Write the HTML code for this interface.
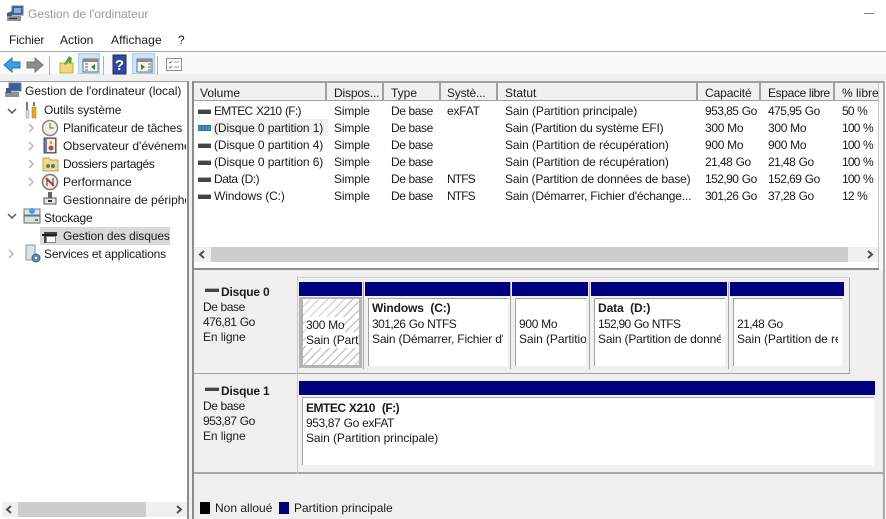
<!DOCTYPE html>
<html lang="fr"><head><meta charset="utf-8"><title>Gestion de l'ordinateur</title>
<style>
html,body{margin:0;padding:0}
body{width:886px;height:519px;position:relative;overflow:hidden;background:#f0f0f0;font:12px/16px "Liberation Sans",sans-serif;color:#1a1a1a}
div,span,svg{position:absolute}
.t{white-space:nowrap;line-height:16px}
.b{font-weight:bold}
.navy{background:#000080}
.cell{overflow:hidden;white-space:nowrap}
.part{background:#fff;border-left:1px solid #a0a0a0;border-top:1px solid #a0a0a0}
.hd{top:83px;height:17px;background:#f0f0f0;border-right:2px solid #a0a0a0;border-bottom:1px solid #a0a0a0}
.go{letter-spacing:-.55px;word-spacing:.6px}
.mo{letter-spacing:-.3px}
.pc{letter-spacing:-.8px;word-spacing:.8px}
.si{letter-spacing:-.15px}
.db{letter-spacing:-.4px}
.nt{letter-spacing:-.9px}
.st{letter-spacing:-.07px}
.sd{letter-spacing:-.17px}
</style></head><body>

<!-- title + menu -->
<div style="left:0;top:0;width:886px;height:51px;background:#fff"></div>
<svg style="left:6px;top:5px" width="18" height="17" viewBox="0 0 18 17"><rect x="6" y="1" width="11" height="9" fill="#3a5c9c" stroke="#6b7a99"/><rect x="8" y="3" width="7" height="5" fill="#7fb0e8"/><path d="M1 8l5-2v5H1z" fill="#41598a"/><rect x="1" y="11" width="14" height="5" fill="#8a8f98"/><rect x="3" y="13" width="8" height="1" fill="#333"/></svg>
<div class="t" style="left:28px;top:6px;color:#999">Gestion de l'ordinateur</div>
<div style="left:864px;top:13px;width:10px;height:1px;background:#888"></div>
<div class="t" style="left:9px;top:32px;letter-spacing:-.1px">Fichier</div>
<div class="t" style="left:60px;top:32px">Action</div>
<div class="t" style="left:111px;top:32px;letter-spacing:.1px">Affichage</div>
<div class="t" style="left:178px;top:32px">?</div>
<div style="left:0;top:51px;width:886px;height:1px;background:#a9a9a9"></div>

<!-- toolbar -->
<div style="left:0;top:52px;width:886px;height:22px;background:#fbfbfb"></div>
<svg style="left:0;top:52px" width="190" height="24" viewBox="0 0 190 24">
<path d="M4 13l8-7v4h8v6h-8v4z" fill="#3ea0e4" stroke="#2a77b8"/>
<path d="M43 13l-8-7v4h-8v6h8v4z" fill="#8c8c8c" stroke="#777"/>
<rect x="49" y="4" width="1" height="19" fill="#b0b0b0"/>
<path d="M60 11h13v10H60z" fill="#f2d67c" stroke="#c9a94e"/><path d="M64 12l5-8 3 2-1 6-3-2-2 3z" fill="#58a83c"/>
<rect x="78.500" y="1.500" width="21" height="20" fill="#cce4f7" stroke="#a6cfee"/>
<rect x="83" y="7" width="15" height="13" fill="#f2f2f2" stroke="#707070" stroke-width="1"/><rect x="83" y="7" width="15" height="3" fill="#8a8a8a"/><path d="M95 12v6l-4-3z" fill="#2e8b3e"/><path d="M85 12h3M85 15h3M85 18h3" stroke="#666"/>
<rect x="103" y="4" width="1" height="19" fill="#b0b0b0"/>
<rect x="113" y="3" width="13" height="19" fill="#30479c" stroke="#1c2e70"/>
<text x="119.500" y="18" font-family="Liberation Sans" font-size="15" font-weight="bold" fill="#fff" text-anchor="middle">?</text>
<rect x="132.500" y="1.500" width="22" height="20" fill="#cce4f7" stroke="#a6cfee"/>
<rect x="137" y="7" width="15" height="13" fill="#f2f2f2" stroke="#707070"/><rect x="137" y="7" width="15" height="3" fill="#8a8a8a"/><path d="M141 12v6l4-3z" fill="#2e8b3e"/><path d="M148 12h3M148 15h3M148 18h3" stroke="#666"/>
<rect x="157" y="4" width="1" height="19" fill="#b0b0b0"/>
<rect x="166.500" y="6.500" width="15" height="12" fill="#fff" stroke="#8c8c8c"/><path d="M169 10l1 1 2-2M169 15l1 1 2-2" stroke="#4a8fd0" fill="none"/><path d="M174 10h5M174 15h5" stroke="#999"/>
</svg>

<!-- left tree panel -->
<div style="left:0;top:81px;width:187px;height:438px;background:#fff;border-top:1px solid #a0a0a0;box-sizing:border-box"></div>
<div style="left:187px;top:81px;width:2px;height:438px;background:#8c8c8c"></div>
<div style="left:40px;top:227px;width:130px;height:18px;background:#d9d9d9"></div>
<div style="left:0;top:82px;width:186px;height:410px;overflow:hidden">
<div class="t" style="left:25px;top:1px">Gestion de l'ordinateur (local)</div>
<div class="t" style="left:44px;top:20px;letter-spacing:-.1px">Outils système</div>
<div class="t" style="left:63px;top:38px;letter-spacing:-.1px">Planificateur de tâches</div>
<div class="t" style="left:63px;top:56px">Observateur d'événements</div>
<div class="t" style="left:63px;top:74px;letter-spacing:-.3px">Dossiers partagés</div>
<div class="t" style="left:63px;top:92px">Performance</div>
<div class="t" style="left:63px;top:110px">Gestionnaire de périphériques</div>
<div class="t" style="left:44px;top:128px;letter-spacing:-.2px">Stockage</div>
<div class="t" style="left:63px;top:146px;letter-spacing:-.1px">Gestion des disques</div>
<div class="t" style="left:44px;top:164px;letter-spacing:-.17px">Services et applications</div>
</div>
<svg style="left:0;top:82px" width="62" height="182" viewBox="0 0 62 182">
<rect x="9" y="1" width="12" height="8" fill="#3a5c9c" stroke="#6b7a99"/><rect x="5" y="10" width="14" height="5" fill="#8a8f98"/><rect x="6" y="6" width="5" height="5" fill="#41598a"/>
<path d="M8 27l4 4 4-4" fill="none" stroke="#555" stroke-width="1.500"/>
<path d="M27 20v10M34 20v4" stroke="#777" stroke-width="2"/><rect x="26" y="28" width="3" height="8" fill="#ddd" stroke="#888" stroke-width=".5"/><rect x="32" y="25" width="4" height="11" fill="#e9a820" stroke="#9a7010" stroke-width=".5"/>
<path d="M29 42l4 4-4 4M29 60l4 4-4 4M29 78l4 4-4 4M29 96l4 4-4 4" fill="none" stroke="#b4b4b4" stroke-width="1.500"/>
<path d="M8 132l4 4 4-4" fill="none" stroke="#555" stroke-width="1.500"/>
<path d="M9 168l4 4-4 4" fill="none" stroke="#b4b4b4" stroke-width="1.500"/>
<circle cx="50" cy="46" r="7.500" fill="#f2efe3" stroke="#8a8a8a" stroke-width="1.500"/><path d="M50 41v5h4" fill="none" stroke="#666"/>
<rect x="44" y="56" width="12" height="15" fill="#6f7fb0" stroke="#445"/><rect x="47" y="57" width="8" height="13" fill="#f5f0dc"/><circle cx="51" cy="66" r="2.500" fill="#c8444c"/><rect x="50" y="59" width="2" height="3" fill="#d9a020"/>
<path d="M43 76h6l2 2h7v11H43z" fill="#eed98c" stroke="#bda14c"/><circle cx="48" cy="84" r="2" fill="#4c8c4c"/><circle cx="53" cy="84" r="2" fill="#4a70b0"/>
<circle cx="50" cy="100" r="7.500" fill="#f4efe6" stroke="#777" stroke-width="1.500"/><path d="M46 96l8 8" stroke="#c63a2c" stroke-width="2"/><path d="M47 104v-6M53 96v6" stroke="#333"/>
<rect x="48" y="110" width="4" height="6" fill="#666"/><rect x="44" y="116" width="12" height="6" fill="#e8e8e8" stroke="#555"/><rect x="48" y="118" width="4" height="2" fill="#333"/>
<rect x="24" y="127" width="16" height="6" fill="#dfe7ee" stroke="#6a7a88"/><circle cx="32" cy="129" r="3" fill="#4a9de0"/><rect x="24" y="134" width="16" height="7" fill="#d8e2d8" stroke="#667"/><rect x="35" y="137" width="3" height="2" fill="#3fa040"/>
<rect x="44" y="150" width="13" height="4" fill="#444"/><rect x="42" y="152" width="15" height="2" fill="#222"/><path d="M46.500 154.500h9v6h-9z" fill="#fff" stroke="#888"/><rect x="44" y="154" width="2" height="7" fill="#444"/>
<rect x="26" y="163" width="9" height="15" fill="#dfe3e8" stroke="#8a94a0"/><circle cx="36" cy="176" r="4" fill="#5a90c0" stroke="#366690"/><circle cx="36" cy="176" r="1.200" fill="#fff"/>
</svg>
<!-- left scrollbar -->
<div style="left:2px;top:502px;width:185px;height:15px;background:#f0f0f0"></div>
<div style="left:18px;top:502px;width:128px;height:15px;background:#cdcdcd"></div>
<svg style="left:0;top:502px" width="187" height="15"><path d="M11 4L7 7.500l4 3.500M177 4l4 3.500-4 3.500" fill="none" stroke="#505050" stroke-width="2"/></svg>

<!-- list panel -->
<div style="left:192px;top:81px;width:694px;height:189px;background:#fff;border-top:2px solid #a0a0a0;box-sizing:border-box"></div>
<div style="left:878px;top:83px;width:1px;height:187px;background:#c8c8c8"></div>
<div style="left:879px;top:83px;width:4px;height:187px;background:#f8f8f8"></div>
<div style="left:194px;top:268px;width:685px;height:2px;background:#8c8c8c"></div>
<div class="hd" style="left:194px;width:131px"></div>
<div class="hd" style="left:327px;width:55px"></div>
<div class="hd" style="left:384px;width:55px"></div>
<div class="hd" style="left:441px;width:55px"></div>
<div class="hd" style="left:498px;width:198px"></div>
<div class="hd" style="left:698px;width:61px"></div>
<div class="hd" style="left:761px;width:72px"></div>
<div class="hd" style="left:835px;width:43px;border-right:0"></div>
<div class="t" style="left:200px;top:85px">Volume</div>
<div class="t si" style="left:334px;top:85px">Dispos...</div>
<div class="t" style="left:391px;top:85px">Type</div>
<div class="t" style="left:447px;top:85px;letter-spacing:-.2px">Systè...</div>
<div class="t" style="left:505px;top:85px">Statut</div>
<div class="t" style="left:705px;top:85px;letter-spacing:-.1px">Capacité</div>
<div class="t" style="left:768px;top:85px;letter-spacing:-.35px">Espace libre</div>
<div class="t" style="left:842px;top:85px">% libre</div>

<div style="left:212px;top:119px;width:116px;height:17px;background:#f0f0f0"></div>
<svg style="left:197px;top:105px" width="16" height="100">
<g fill="#444"><rect x="1" y="4" width="13" height="5"/><rect x="1" y="38" width="13" height="5"/><rect x="1" y="55" width="13" height="5"/><rect x="1" y="72" width="13" height="5"/><rect x="1" y="89" width="13" height="5"/></g>
<g fill="#a8b8a8"><rect x="1" y="4" width="13" height="1"/><rect x="1" y="38" width="13" height="1"/><rect x="1" y="55" width="13" height="1"/><rect x="1" y="72" width="13" height="1"/><rect x="1" y="89" width="13" height="1"/></g>
<rect x="1" y="20" width="13" height="6" fill="#1f66b0"/><path d="M1 22h13M1 24h13M3 20v6M6 20v6M9 20v6M12 20v6" stroke="#9fd0f0" stroke-width=".4"/>
</svg>

<div class="t" style="left:214px;top:103px;letter-spacing:-.7px;word-spacing:1px">EMTEC X210 (F:)</div><div class="t si" style="left:334px;top:103px">Simple</div><div class="t db" style="left:391px;top:103px">De base</div><div class="t" style="left:447px;top:103px;letter-spacing:-.2px">exFAT</div><div class="t st" style="left:505px;top:103px">Sain (Partition principale)</div><div class="t go" style="left:705px;top:103px">953,85 Go</div><div class="t go" style="left:768px;top:103px">475,95 Go</div><div class="t pc" style="left:842px;top:103px">50 %</div>
<div class="t" style="left:214px;top:120px;letter-spacing:-.1px">(Disque 0 partition 1)</div><div class="t si" style="left:334px;top:120px">Simple</div><div class="t db" style="left:391px;top:120px">De base</div><div class="t" style="left:505px;top:120px;letter-spacing:-.25px">Sain (Partition du système EFI)</div><div class="t mo" style="left:705px;top:120px">300 Mo</div><div class="t mo" style="left:768px;top:120px">300 Mo</div><div class="t pc" style="left:842px;top:120px">100 %</div>
<div class="t" style="left:214px;top:137px;letter-spacing:-.1px">(Disque 0 partition 4)</div><div class="t si" style="left:334px;top:137px">Simple</div><div class="t db" style="left:391px;top:137px">De base</div><div class="t st" style="left:505px;top:137px">Sain (Partition de récupération)</div><div class="t mo" style="left:705px;top:137px">900 Mo</div><div class="t mo" style="left:768px;top:137px">900 Mo</div><div class="t pc" style="left:842px;top:137px">100 %</div>
<div class="t" style="left:214px;top:154px;letter-spacing:-.1px">(Disque 0 partition 6)</div><div class="t si" style="left:334px;top:154px">Simple</div><div class="t db" style="left:391px;top:154px">De base</div><div class="t st" style="left:505px;top:154px">Sain (Partition de récupération)</div><div class="t go" style="left:705px;top:154px">21,48 Go</div><div class="t go" style="left:768px;top:154px">21,48 Go</div><div class="t pc" style="left:842px;top:154px">100 %</div>
<div class="t" style="left:214px;top:171px;letter-spacing:-.45px;word-spacing:.6px">Data (D:)</div><div class="t si" style="left:334px;top:171px">Simple</div><div class="t db" style="left:391px;top:171px">De base</div><div class="t nt" style="left:447px;top:171px">NTFS</div><div class="t sd" style="left:505px;top:171px">Sain (Partition de données de base)</div><div class="t go" style="left:705px;top:171px">152,90 Go</div><div class="t go" style="left:768px;top:171px">152,69 Go</div><div class="t pc" style="left:842px;top:171px">100 %</div>
<div class="t" style="left:214px;top:188px;letter-spacing:-.1px">Windows (C:)</div><div class="t si" style="left:334px;top:188px">Simple</div><div class="t db" style="left:391px;top:188px">De base</div><div class="t nt" style="left:447px;top:188px">NTFS</div><div class="t sd" style="left:505px;top:188px">Sain (Démarrer, Fichier d'échange...</div><div class="t go" style="left:705px;top:188px">301,26 Go</div><div class="t go" style="left:768px;top:188px">37,28 Go</div><div class="t pc" style="left:842px;top:188px">12 %</div>

<!-- list scrollbar -->
<div style="left:194px;top:247px;width:684px;height:15px;background:#f0f0f0"></div>
<div style="left:211px;top:247px;width:637px;height:15px;background:#cdcdcd"></div>
<svg style="left:194px;top:247px" width="684" height="15"><path d="M10 4L6 7.500l4 3.500M674 4l4 3.500-4 3.500" fill="none" stroke="#505050" stroke-width="2"/></svg>

<!-- disk pane -->
<div style="left:194px;top:270px;width:692px;height:249px;background:#f0f0f0"></div>
<div style="left:192px;top:81px;width:2px;height:438px;background:#8c8c8c"></div>
<div style="left:883px;top:81px;width:2px;height:438px;background:#a8a8a8"></div>
<div style="left:885px;top:81px;width:1px;height:438px;background:#fff"></div>
<div style="left:194px;top:373px;width:656px;height:1px;background:#a0a0a0"></div>
<div style="left:194px;top:472px;width:689px;height:2px;background:#a8a8a8"></div>
<div style="left:297px;top:276px;width:1px;height:198px;background:#c8c8c8"></div>
<div style="left:849px;top:277px;width:1px;height:96px;background:#a8a8a8"></div>
<div style="left:298px;top:277px;width:552px;height:1px;background:#d0d0d0"></div>

<!-- Disk 0 -->
<svg style="left:205px;top:288px" width="15" height="6"><rect width="14" height="4" fill="#444"/><rect width="14" height="1" fill="#a8b8a8"/></svg>
<div class="t b" style="left:221px;top:284px;letter-spacing:-.2px">Disque 0</div>
<div class="t db" style="left:203px;top:299px">De base</div>
<div class="t go" style="left:203px;top:314px">476,81 Go</div>
<div class="t" style="left:203px;top:329px;letter-spacing:-.1px">En ligne</div>

<div class="navy" style="left:299px;top:282px;width:63px;height:14px"></div>
<div class="navy" style="left:365px;top:282px;width:145px;height:14px"></div>
<div class="navy" style="left:512px;top:282px;width:76px;height:14px"></div>
<div class="navy" style="left:591px;top:282px;width:136px;height:14px"></div>
<div class="navy" style="left:730px;top:282px;width:114px;height:14px"></div>
<div style="left:363px;top:282px;width:1px;height:87px;background:#a8a8a8"></div>
<div style="left:510px;top:282px;width:1px;height:87px;background:#a8a8a8"></div>
<div style="left:589px;top:282px;width:1px;height:87px;background:#a8a8a8"></div>
<div style="left:728px;top:282px;width:1px;height:87px;background:#a8a8a8"></div>

<!-- hatched -->
<div style="left:299px;top:297px;width:63px;height:71px;background:#b4b4b4"></div>
<div class="cell" style="left:303px;top:299px;width:56px;height:66px;background:#fff repeating-linear-gradient(135deg,#fff 0,#fff 5px,#b8b8b8 5px,#b8b8b8 6px)">
<span class="t mo" style="left:3px;top:18px;background:#fff">300 Mo</span>
<span class="t" style="left:3px;top:33px;background:#fff;letter-spacing:-.1px">Sain (Part</span>
</div>

<div class="part" style="left:368px;top:298px;width:139px;height:67px"></div>
<div class="cell" style="left:369px;top:299px;width:134px;height:66px">
<span class="t b" style="left:3px;top:1px;letter-spacing:-.1px">Windows&nbsp; (C:)</span><span class="t go" style="left:3px;top:17px">301,26 Go NTFS</span><span class="t sd" style="left:3px;top:32px">Sain (Démarrer, Fichier d'échange</span>
</div>
<div class="part cell" style="left:515px;top:298px;width:70px;height:67px">
<span class="t mo" style="left:3px;top:17px">900 Mo</span><span class="t st" style="left:3px;top:32px">Sain (Partition de récupération)</span>
</div>
<div class="part" style="left:594px;top:298px;width:130px;height:67px"></div>
<div class="cell" style="left:595px;top:299px;width:126px;height:66px">
<span class="t b" style="left:3px;top:1px;letter-spacing:-.1px">Data&nbsp; (D:)</span><span class="t" style="left:3px;top:17px;letter-spacing:-.7px;word-spacing:.7px">152,90 Go NTFS</span><span class="t sd" style="left:3px;top:32px">Sain (Partition de données de base)</span>
</div>
<div class="part" style="left:733px;top:298px;width:108px;height:67px"></div>
<div class="cell" style="left:734px;top:299px;width:104px;height:66px">
<span class="t go" style="left:3px;top:17px">21,48 Go</span><span class="t st" style="left:3px;top:32px">Sain (Partition de récupération)</span>
</div>

<!-- Disk 1 -->
<svg style="left:205px;top:387px" width="15" height="6"><rect width="14" height="4" fill="#444"/><rect width="14" height="1" fill="#a8b8a8"/></svg>
<div class="t b" style="left:221px;top:383px;letter-spacing:-.2px">Disque 1</div>
<div class="t db" style="left:203px;top:398px">De base</div>
<div class="t go" style="left:203px;top:413px">953,87 Go</div>
<div class="t" style="left:203px;top:428px;letter-spacing:-.1px">En ligne</div>
<div class="navy" style="left:299px;top:381px;width:576px;height:14px"></div>
<div class="part cell" style="left:302px;top:397px;width:571px;height:67px">
<span class="t b" style="left:3px;top:2px;letter-spacing:-.5px;word-spacing:.6px">EMTEC X210&nbsp; (F:)</span><span class="t" style="left:3px;top:17px;letter-spacing:-.4px;word-spacing:.4px">953,87 Go exFAT</span><span class="t st" style="left:3px;top:32px">Sain (Partition principale)</span>
</div>

<!-- legend -->
<div style="left:200px;top:502px;width:10px;height:12px;background:#000"></div>
<div class="t" style="left:215px;top:500px">Non alloué</div>
<div style="left:279px;top:502px;width:10px;height:12px;background:#000080"></div>
<div class="t" style="left:294px;top:500px">Partition principale</div>
</body></html>
